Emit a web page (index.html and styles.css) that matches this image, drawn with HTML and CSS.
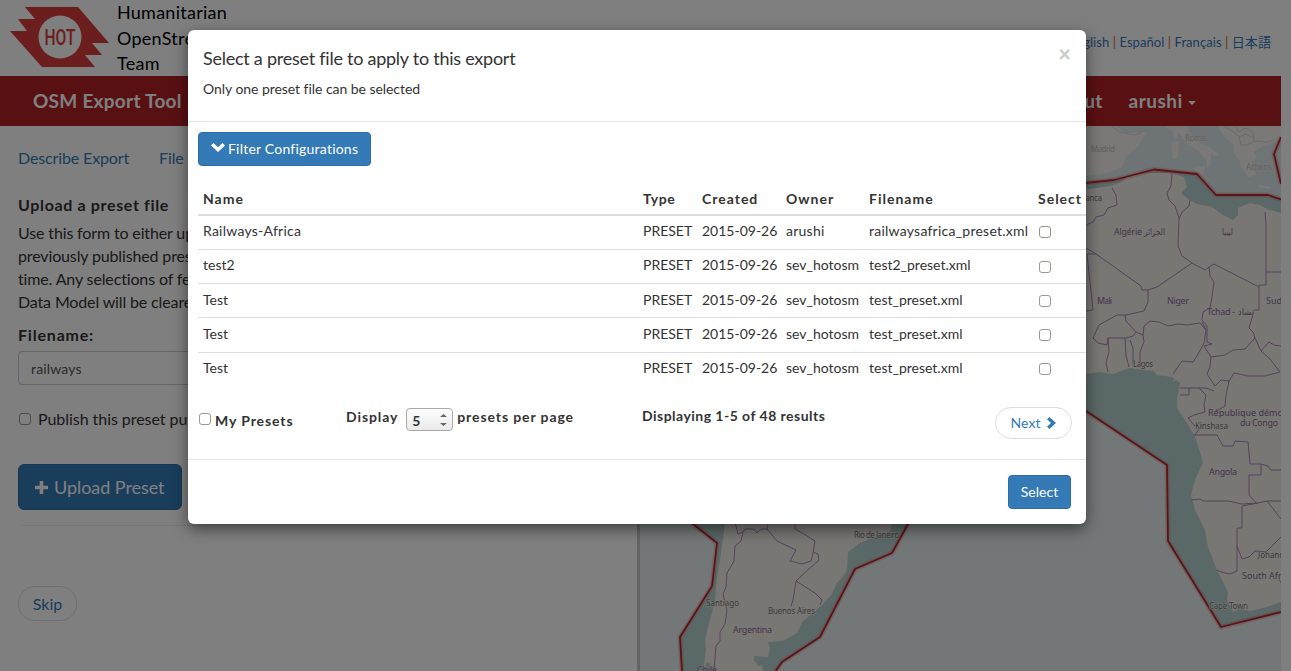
FILE: index.html
```html
<!DOCTYPE html>
<html lang="en">
<head>
<meta charset="utf-8">
<title>OSM Export Tool</title>
<link rel="stylesheet" href="styles.css">
</head>
<body>
<div class="page">
  <header class="top">
    <svg class="logo" width="100" height="62" viewBox="0 0 100 62">
      <path fill="#d83a3a" d="M15 1H68L99 37H82L92 49H75L85 61H32L0 25H17L8 13H25Z"/>
      <circle cx="50" cy="31" r="21.5" fill="#fff"/>
      <text x="50" y="39" text-anchor="middle" textLength="31" lengthAdjust="spacingAndGlyphs" class="logo-text">HOT</text>
    </svg>
    <div class="org">Humanitarian<br>OpenStreetMap<br>Team</div>
    <div class="langs"><a>English</a> | <a>Español</a> | <a>Français</a> | <a>日本語</a></div>
  </header>
  <nav class="nav">
    <span class="brand">OSM Export Tool</span>
    <span class="nav-right"><span>About</span><span class="user">arushi <i class="caret"></i></span></span>
  </nav>
  <main class="main">
    <section class="form">
      <div class="tabs"><a>Describe Export</a><a>File Formats</a></div>
      <div class="panel">
        <h4 class="title">Upload a preset file</h4>
        <p class="help">Use this form to either upload a preset file or select a<br>previously published preset file. Only one can be used at a<br>time. Any selections of features made on the<br>Data Model will be cleared.</p>
        <div class="label">Filename:</div>
        <div class="input">railways</div>
        <div class="publish"><i class="check"></i><span>Publish this preset publicly</span></div>
        <div class="upload"><svg width="13" height="13" viewBox="0 0 13 13"><path fill="#fff" d="M4.7 0h3.6v4.7H13v3.6H8.300V13H4.700V8.300H0V4.700h4.700z"/></svg><span>Upload Preset</span></div>
      </div>
      <div class="skip">Skip</div>
    </section>
    <svg class="map" width="641" height="545" viewBox="640 126 641 545">
      <rect x="640" y="126" width="641" height="545" fill="#e6eef0"/>
      <rect x="1060" y="126" width="221" height="90" fill="#dde6ea"/>
      <g fill="#f4f3f0">
        <path d="M1060 126H1116L1126 133 1146 132 1139 146 1127 155 1122 167 1108 173 1086 176H1060Z"/>
        <path d="M1165 126H1187L1193 137 1202 144 1211 148 1219 155 1214 156 1211 152 1211 163 1207 169 1206 160 1199 151 1188 145 1179 134 1170 130Z"/>
        <path d="M1171 142L1179 141 1178 157 1173 159ZM1173 132L1177 128 1178 138 1174 139ZM1191 168L1205 166 1203 175Z"/>
        <path d="M1217 126H1281V138L1272 144 1262 147 1254 152 1257 158 1252 162 1256 174 1249 178 1243 170 1239 160 1233 152 1234 145 1224 136Z"/>
        <path d="M1258 185L1272 187 1270 189 1259 187Z"/>
      </g>
      <path fill="#b5d0cf" d="M1080 184L1114 180 1154 169 1197 174 1216 195H1268L1281 199V612L1221 627 1168 541 1167 465 1080 407Z"/>
      <path fill="#f3efe8" d="M1080 190L1090 189 1110 186 1122 182 1128 176 1150 173 1172 173 1184 177 1187 187 1181 193 1188 199 1197 204 1212 207 1223 215 1233 220 1238 215 1238 208 1250 203 1260 205 1267 209 1281 213V602L1267 607 1250 611 1240 609 1233 612 1227 600 1228 592 1217 570 1208 547 1205 530 1195 510 1191 495 1195 480 1203 463 1200 452 1195 437 1187 423 1177 408 1177 400 1180 383 1172 377 1157 375 1153 371 1143 370 1130 368 1113 374 1100 372 1080 375Z"/>
      <path fill="#b5d0cf" d="M670 506L693 524 717 543 712 586 680 637 682 671H776L782 662 820 637 855 569 892 553 908 524V506Z"/>
      <path fill="#f3efe8" d="M727 510H892V524L890 532 875 537 860 543 848 552 847 570 842 578 837 583 832 594 822 605 815 611 802 622 797 633 783 641 768 642 770 648 768 657 754 656 754 660 762 671H705L704 663 706 650 705 640 708 627 712 613 715 600 716 588 717 577 720 560Z"/>
      <path fill="#f3efe8" d="M1173 380l3-1-2 3ZM754 668l8-3 1 6h-8Z"/>
      <path fill="#b5d0cf" d="M706 662l5 2-3 3 8-1-4 5h-7Z"/>
      <g fill="none" stroke="#dccfe0" stroke-width="1">
        <path d="M1112 126L1120 132 1135 135 1141 133M1224 126L1234 132 1239 137 1241 145 1247 145 1255 141 1267 142 1274 140M1235 126L1239 132 1245 128 1253 132 1254 141M1239 137L1246 134 1252 137"/>
      </g>
      <g fill="none" stroke="#af82ba" stroke-width="1" stroke-linejoin="round">
        <path d="M1086 225L1093 222 1096 217 1104 215 1108 208 1117 205 1116 195 1112 188M1172 173L1171 186 1167 193 1169 200 1175 206 1179 218 1178 246 1182 256 1192 263 1205 270 1209 267 1214 264 1259 287V285H1266V225L1265 212M1190 200L1189 206 1182 212 1179 219M1266 272H1281M1192 263L1157 287 1148 290H1142L1141 286 1134 281 1096 254 1086 248M1096 254H1087L1093 310 1086 311M1148 290V302L1144 311 1126 315 1117 315 1099 325 1093 338 1098 343 1107 345 1108 338H1126L1133 336 1136 332 1126 321 1125 315M1108 338L1109 352 1106 363 1108 372M1125 338L1126 356 1129 367M1130 340L1133 348V364M1136 332L1143 335 1144 342 1140 352 1140 365M1143 335L1144 326 1150 321 1159 322 1168 326 1178 324 1187 325 1200 323 1206 330 1204 343 1197 356 1193 362 1182 361 1173 374M1209 267L1210 276 1214 282 1212 297 1210 308 1203 312 1202 320 1207 326 1207 342 1212 344 1204 346 1211 357 1210 367 1207 374 1215 386 1221 380 1229 381 1226 395 1225 406 1215 412M1206 330L1202 322M1211 357L1225 355 1233 350 1245 349 1255 338 1261 351 1270 359 1280 372 1265 376 1248 376 1234 373 1229 381M1259 287V310H1254L1252 318 1249 328 1253 332 1255 338M1261 351L1269 342 1274 345 1281 346M1180 388H1206L1214 391M1180 395H1189V388M1199 388L1206 395 1204 405 1205 412 1194 415 1188 418 1195 426"/>
        <path d="M1193 435H1217L1223 446 1233 446 1235 441 1248 442 1250 464H1261V475H1249V495L1256 503M1191 500L1200 499 1203 501H1228L1242 504 1258 503 1267 501 1281 501M1261 464L1268 466 1271 470 1281 470M1242 506V528H1237V571L1230 574 1221 572 1217 570M1242 506L1258 503M1267 501L1281 519M1237 546L1242 559 1249 557 1255 551 1266 552 1281 537M1279 579L1281 583M1195 435L1202 425"/>
        <path d="M732 510L738 534 743 532 745 529 754 529 757 533 761 529H767L770 514M743 532L741 541 735 546 734 561 727 573 726 587 723 594 727 610 725 624 720 632 720 641 716 646 714 671M767 529L777 541 796 550 790 561 802 564 811 561 813 553 815 541 804 534 795 529V515M813 552L818 554 819 560 811 567 796 581 793 600 791 606M796 581L815 593 822 600 820 605"/>
      </g>
      <g fill="none" stroke-linejoin="round">
        <g stroke="#e06a6a" stroke-width="5" stroke-opacity=".3">
          <path id="l1" d="M1080 183.500L1114 180 1154 169.500 1197 174 1216 195H1268L1281 199.500M1281 137L1274 154 1281 184M1080 407L1167 465 1168 541 1221 627 1281 612M670 506L693 524 717 543 712 586 680 637 682 672M915 510L908 524 892 553 855 569 820 637 782 662 775 672"/>
        </g>
        <use href="#l1" stroke="#b8262c" stroke-width="1.800"/>
      </g>
      <g class="country">
        <text x="1114" y="235" textLength="28">Algérie</text><text x="1144" y="235" textLength="21" lengthAdjust="spacingAndGlyphs">الجزائر</text>
        <text x="1222" y="235" textLength="11" lengthAdjust="spacingAndGlyphs">ليبيا</text>
        <text x="1097" y="304" textLength="15">Mali</text>
        <text x="1167" y="304" textLength="22">Niger</text>
        <text x="1207" y="315" textLength="28">Tchad -</text><text x="1238" y="315" textLength="16" lengthAdjust="spacingAndGlyphs">تشاد</text>
        <text x="1266" y="304">Sudan</text>
        <text x="1208" y="416">République démocratique</text>
        <text x="1240" y="426" textLength="38">du Congo</text>
        <text x="1209" y="475" textLength="28">Angola</text>
        <text x="1242" y="579">South Africa</text>
        <text x="733" y="633" textLength="39">Argentina</text>
        <text x="697" y="673" textLength="20">Chile</text>
      </g>
      <g class="city">
        <text x="1133" y="367" textLength="20">Lagos</text>
        <text x="1195" y="429" textLength="33">Kinshasa</text>
        <text x="1258" y="558">Johannesburg</text>
        <text x="1209" y="609" textLength="39">Cape Town</text>
        <text x="854" y="538" textLength="45">Rio de Janeiro</text>
        <text x="706" y="606" textLength="33">Santiago</text>
        <text x="768" y="614" textLength="47">Buenos Aires</text>
        <text x="1063" y="201" textLength="39">Casablanca</text>
      </g>
      <g class="city faint">
        <text x="1091" y="152" textLength="24">Madrid</text>
        <text x="1185" y="141" textLength="21">Rome</text>
        <text x="1246" y="170" textLength="26">Athens</text>
      </g>
    </svg>
  </main>
</div>
<div class="backdrop">
  <div class="modal">
    <div class="m-head">
      <div><div class="m-title">Select a preset file to apply to this export</div>
      <div class="m-sub">Only one preset file can be selected</div></div>
      <span class="close">×</span>
    </div>
    <div class="m-body">
      <div class="btn filter"><svg width="14" height="9" viewBox="0 0 14 9"><path fill="#fff" d="M0 2.500L2.400 0 7 4.300 11.600 0 14 2.500 7 9Z"/></svg><span>Filter Configurations</span></div>
      <div class="table">
        <div class="row head"><span>Name</span><span class="tight">Type</span><span>Created</span><span>Owner</span><span>Filename</span><span>Select</span></div>
        <div class="row"><span class="wide">Railways-Africa</span><span>PRESET</span><span>2015-09-26</span><span class="wide">arushi</span><span class="wide">railwaysafrica_preset.xml</span><span><i class="check"></i></span></div>
        <div class="row"><span>test2</span><span>PRESET</span><span>2015-09-26</span><span>sev_hotosm</span><span>test2_preset.xml</span><span><i class="check"></i></span></div>
        <div class="row"><span>Test</span><span>PRESET</span><span>2015-09-26</span><span>sev_hotosm</span><span>test_preset.xml</span><span><i class="check"></i></span></div>
        <div class="row"><span>Test</span><span>PRESET</span><span>2015-09-26</span><span>sev_hotosm</span><span>test_preset.xml</span><span><i class="check"></i></span></div>
        <div class="row"><span>Test</span><span>PRESET</span><span>2015-09-26</span><span>sev_hotosm</span><span>test_preset.xml</span><span><i class="check"></i></span></div>
      </div>
      <div class="pager">
        <div class="mine"><i class="check"></i><span>My Presets</span></div>
        <div class="per"><span>Display</span><span class="select">5<svg width="7" height="12" viewBox="0 0 7 12"><path fill="#666" d="M0 3L3.500 0 7 3ZM0 9L3.500 12 7 9Z"/></svg></span><span>presets per page</span></div>
        <div class="count">Displaying 1-5 of 48 results</div>
        <div class="next"><span>Next</span><svg width="9" height="12" viewBox="0 0 9 12"><path fill="#337ab7" d="M2.500 0L9 6 2.500 12 0 9.700 4 6 0 2.300Z"/></svg></div>
      </div>
    </div>
    <div class="m-foot"><div class="btn ok">Select</div></div>
  </div>
</div>
</body>
</html>
```
FILE: styles.css
```css
* { box-sizing: border-box; }
body { margin: 0; width: 1291px; height: 671px; overflow: hidden; background: #fff; color: #333; font: 14px/20px Lato, "Noto Sans CJK JP", sans-serif; }
a { color: #337ab7; }
.page { width: 1281px; height: 671px; }
.top { display: flex; height: 76px; }
.logo { margin: 6px 0 0 10px; flex: none; }
.logo-text { font: 500 22px Roboto, sans-serif; fill: #d83a3a; }
.org { margin-left: 7px; font-size: 18px; line-height: 25.500px; color: #000; letter-spacing: .25px; }
.langs { margin: 32px 10px 0 auto; font-size: 13px; letter-spacing: .07px; color: #d2691e; white-space: nowrap; }
.nav { display: flex; justify-content: space-between; height: 50px; padding: 0 85px 0 33px; background: #b22026; color: #fff; font-size: 19px; font-weight: bold; line-height: 50px; letter-spacing: .27px; }
.nav-right { display: flex; gap: 26px; }
.user { letter-spacing: .5px; }
.caret { display: inline-block; border: 4px solid transparent; border-top-color: #fff; border-bottom: 0; vertical-align: 3px; }
.main { display: flex; height: 545px; }
.form { width: 637px; padding: 21px 0 0 18px; font-size: 16px; }
.tabs { display: flex; gap: 30px; line-height: 22px; letter-spacing: -.13px; }
.tabs a { white-space: nowrap; }
.panel { height: 357px; border-bottom: 1px solid #eee; }
.title { margin: 0; padding-top: 25px; font-size: 16px; line-height: 22px; letter-spacing: .65px; }
.help { margin: 5px 0 0; line-height: 23px; letter-spacing: -.14px; white-space: nowrap; }
.label { margin-top: 11px; font-weight: bold; line-height: 22px; letter-spacing: .8px; }
.input { height: 34px; margin-top: 5px; padding: 0 12px; border: 1px solid #ccc; border-radius: 4px; color: #555; font-size: 14px; line-height: 34px; letter-spacing: .15px; }
.publish { display: flex; align-items: flex-start; gap: 7px; height: 22px; margin: 24px 0 0 1px; letter-spacing: -.05px; }
.check { display: block; flex: none; width: 12px; height: 12px; border: 1px solid #9c9890; border-radius: 3px; background: #fff; }
.publish .check { margin-top: 4px; }
.upload { display: flex; align-items: center; gap: 6px; width: 164px; height: 46px; margin-top: 33px; padding-left: 16px; border: 1px solid #2e6da4; border-radius: 6px; background: #337ab7; color: #fff; font-size: 18px; letter-spacing: -.05px; }
.skip { width: 59px; height: 35px; margin-top: 60px; border: 1px solid #ddd; border-radius: 17px; color: #337ab7; line-height: 34px; text-align: center; }
.map { flex: none; width: 644px; height: 545px; border-left: 3px solid #c8c8c8; }
.country, .city { font: 9px "Noto Sans", "DejaVu Sans", sans-serif; fill: #8a6598; stroke: #f3efe8; stroke-width: 1.500px; stroke-opacity: .6; paint-order: stroke; }
.city { font-size: 8px; fill: #77777a; }
.faint { fill: #c6c3c8; }
.backdrop { position: absolute; inset: 0; padding: 30px 0 0 188px; background: rgba(0,0,0,.5); }
.modal { width: 898px; height: 494px; background: #fff; border-radius: 6px; box-shadow: 0 5px 15px rgba(0,0,0,.5); }
.m-head { display: flex; justify-content: space-between; height: 92px; padding: 15px 15px 0; border-bottom: 1px solid #e5e5e5; }
.m-title { font-size: 18px; line-height: 26px; letter-spacing: -.25px; }
.m-sub { margin-top: 8px; line-height: 20px; letter-spacing: -.05px; }
.close { font-size: 22px; font-weight: 900; line-height: 18px; color: #ccc; }
.m-body { height: 338px; padding: 10px 0 0 10px; border-bottom: 1px solid #e5e5e5; }
.btn { height: 34px; border: 1px solid #2e6da4; border-radius: 4px; background: #337ab7; color: #fff; line-height: 32px; }
.filter { display: flex; align-items: center; gap: 3px; width: 173px; padding-left: 12px; letter-spacing: .22px; }
.filter svg { margin-top: -4px; }
.table { margin-top: 17px; }
.row { display: grid; grid-template-columns: 440px 59px 84px 83px 169px 53px; height: 34.150px; padding-top: 5px; border-bottom: 1px solid #ddd; }
.row > span { padding-left: 5px; white-space: nowrap; }
.row > .wide { letter-spacing: .24px; }
.row:nth-child(4), .row:nth-child(5) { padding-top: 6px; }
.row:last-child { border-bottom: 0; }
.row .check { margin: 5px 0 0 1px; }
.row:nth-child(3) .check { margin-top: 6px; }
.row.head { height: 33px; padding-top: 6px; border-bottom-width: 2px; font-weight: bold; letter-spacing: 1px; }
.head .tight { letter-spacing: .6px; }
.pager { display: grid; grid-template-columns: 148px 296px 353px 77px; margin-top: 20px; font-weight: bold; letter-spacing: .9px; }
.mine { display: flex; gap: 4px; padding: 4px 0 0 1px; }
.mine .check { margin-top: 2px; }
.per { display: flex; }
.count { margin-top: -1px; letter-spacing: .47px; }
.select { display: flex; justify-content: space-between; width: 47px; height: 23px; margin: 1px 4px 0 8px; padding: 5px 5px 0 5px; border: 1px solid #aaa; border-radius: 4px; background: linear-gradient(#fff, #e9e9e9); line-height: 13px; }
.next { display: flex; align-items: center; justify-content: center; gap: 6px; height: 32px; padding-right: 1px; border: 1px solid #ddd; border-radius: 16px; color: #337ab7; font-weight: normal; letter-spacing: .1px; }
.m-foot { display: flex; justify-content: flex-end; padding: 15px; }
.ok { width: 63px; text-align: center; }
```
